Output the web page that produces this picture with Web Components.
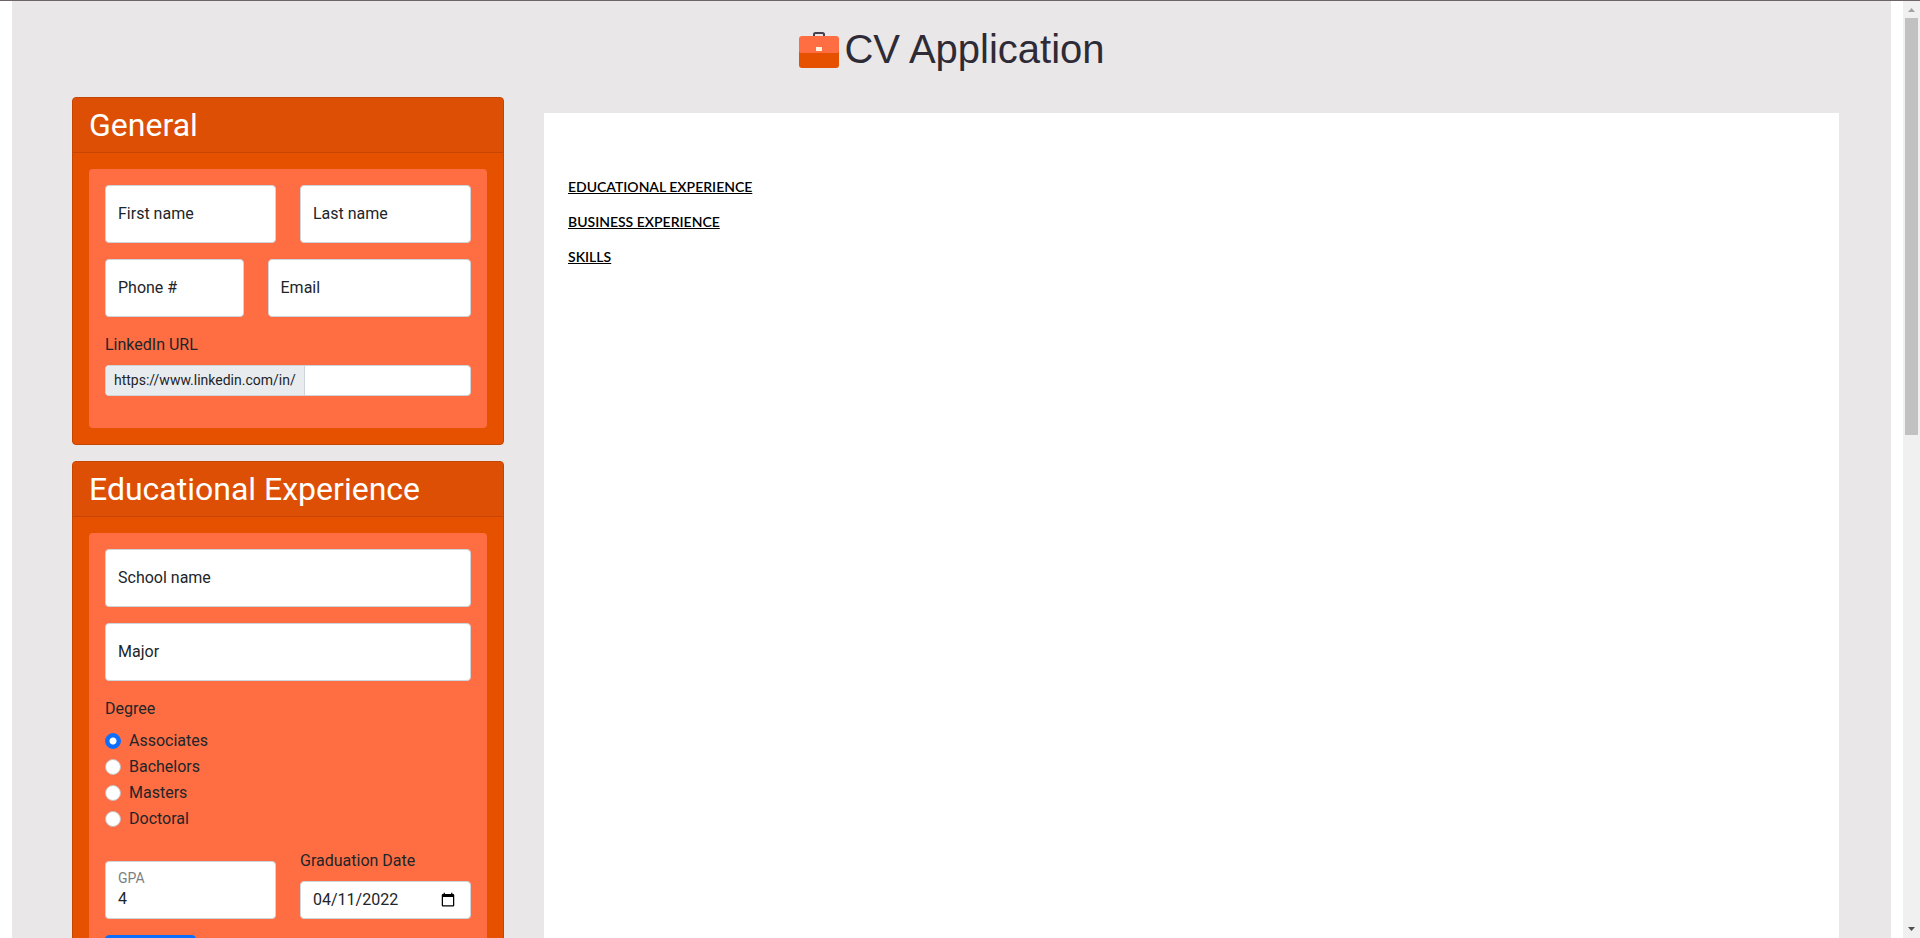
<!DOCTYPE html>
<html lang="en">
<head>
<meta charset="utf-8">
<meta name="viewport" content="width=device-width, initial-scale=1">
<title>CV Application</title>
<style>
  html, body { height: 100%; }
  body { margin: 0; overflow: hidden; background: #fff; color: #212529; font: 400 16px/24px Roboto, "Liberation Sans", sans-serif; }
</style>
</head>
<body>
<cv-app></cv-app>

<template id="tpl-app">
  <style>
    :host { display: flex; height: 100vh; box-sizing: border-box; border-top: 1px solid #6b6569; }
    .viewport { flex: 1; min-width: 0; overflow: hidden; padding: 0 12px; }
    .page { background: #e9e7e8; }
    main { display: grid; grid-template-columns: minmax(0, 432fr) minmax(0, 1295fr); column-gap: 40px; padding: 0 52px 0 60px; }
    .forms { display: flex; flex-direction: column; gap: 16px; padding-bottom: 24px; }
  </style>
  <div class="viewport">
    <div class="page">
      <cv-header>CV Application</cv-header>
      <main>
        <div class="forms">
          <form-card heading="General">
            <form-row>
              <float-field style="grid-column: span 6" label="First name"></float-field>
              <float-field style="grid-column: span 6" label="Last name"></float-field>
            </form-row>
            <form-row>
              <float-field style="grid-column: span 5" label="Phone #" type="tel"></float-field>
              <float-field style="grid-column: span 7" label="Email" type="email"></float-field>
            </form-row>
            <prefix-field label="LinkedIn URL" prefix="https://www.linkedin.com/in/"></prefix-field>
          </form-card>
          <form-card heading="Educational Experience">
            <float-field label="School name"></float-field>
            <float-field label="Major"></float-field>
            <radio-list legend="Degree" options="Associates,Bachelors,Masters,Doctoral"></radio-list>
            <form-row>
              <float-field style="grid-column: span 6" label="GPA" type="number" value="4"></float-field>
              <date-field style="grid-column: span 6" label="Graduation Date" value="2022-04-11"></date-field>
            </form-row>
            <add-button></add-button>
          </form-card>
        </div>
        <cv-paper>
          <h3>Educational Experience</h3>
          <h3>Business Experience</h3>
          <h3>Skills</h3>
        </cv-paper>
      </main>
    </div>
  </div>
  <scroll-rail></scroll-rail>
</template>

<template id="tpl-header">
  <style>
    :host { display: block; padding: 24px 0; }
    h1 { margin: 0; display: flex; justify-content: center; align-items: center; gap: 4px; font: 400 40px/48px "Liberation Sans", Arial, sans-serif; color: #2f2b36; }
    svg { display: block; width: 42px; height: 40px; }
  </style>
  <h1>
    <svg viewBox="0 0 42 40" aria-hidden="true">
      <path d="M16 8V5.500Q16 4 17.500 4H24.500Q26 4 26 5.500V8" fill="none" stroke="#45414c" stroke-width="2"/>
      <rect x="1" y="12" width="40" height="27" rx="3" fill="#e65100"/>
      <path d="M4 7H38Q41 7 41 10V22Q41 24 39 24H3Q1 24 1 22V10Q1 7 4 7Z" fill="#ff6e43"/>
      <rect x="18" y="18" width="6" height="4" fill="#fff3e0"/>
    </svg>
    <span><slot></slot></span>
  </h1>
</template>

<template id="tpl-card">
  <style>
    :host { display: block; background: #e65100; border: 1px solid #c54604; border-radius: 4px; overflow: hidden; }
    h2 { margin: 0; padding: 8px 16px; font-size: 32px; line-height: 38px; font-weight: 400; color: #fff; background: #de4f06; border-bottom: 1px solid #c54604; }
    .body { padding: 16px; }
    form { display: flex; flex-direction: column; gap: 16px; padding: 16px; background: #ff6e42; border-radius: 4px; }
  </style>
  <h2></h2>
  <div class="body"><form><slot></slot></form></div>
</template>

<template id="tpl-row">
  <style>
    :host { display: grid; grid-template-columns: repeat(12, minmax(0, 1fr)); column-gap: 24px; align-items: end; }
  </style>
  <slot></slot>
</template>

<template id="tpl-float">
  <style>
    :host { display: grid; min-width: 0; }
    input, label { grid-area: 1 / 1; }
    input { box-sizing: border-box; width: 100%; height: 58px; margin: 0; padding: 24px 12px 8px; font: inherit; color: #212529; background: #fff; border: 1px solid #ced4da; border-radius: 4px; outline: none; appearance: textfield; }
    input::-webkit-inner-spin-button { display: none; }
    label { padding: 17px 13px; pointer-events: none; z-index: 1; }
    input:focus + label, :host([value]) label { padding: 9px 13px; font-size: 14px; line-height: 16px; color: #7b7f83; }
  </style>
  <input id="field"><label for="field"></label>
</template>

<template id="tpl-prefix">
  <style>
    :host { display: flex; flex-direction: column; gap: 8px; padding-bottom: 16px; }
    .group { display: flex; height: 31px; box-sizing: border-box; border: 1px solid #ced4da; border-radius: 4px; background: #fff; overflow: hidden; font-size: 14px; line-height: 21px; }
    .group span { padding: 4px 8px; background: #e9ecef; border-right: 1px solid #ced4da; }
    input { flex: 1; min-width: 0; border: 0; margin: 0; padding: 4px 8px; font: inherit; background: none; outline: none; }
  </style>
  <label for="field"></label>
  <div class="group"><span></span><input id="field" type="text"></div>
</template>

<template id="tpl-radios">
  <style>
    :host { display: block; }
    fieldset { margin: 0; padding: 0; border: 0; min-width: 0; }
    legend { padding: 0 0 8px; }
    .option { display: flex; align-items: center; gap: 8px; padding-bottom: 2px; }
    input { appearance: none; box-sizing: border-box; width: 16px; height: 16px; margin: 0; border: 1px solid #c4bfc0; border-radius: 50%; background: #fff; }
    input:checked { border-color: #0d6efd; background: radial-gradient(circle, #fff 0 3px, #0d6efd 4px); }
  </style>
  <fieldset><legend></legend></fieldset>
</template>

<template id="tpl-date">
  <style>
    :host { display: flex; flex-direction: column; gap: 8px; min-width: 0; }
    input { box-sizing: border-box; width: 100%; height: 38px; margin: 0; padding: 6px 12px; font: inherit; color: #212529; background: #fff; border: 1px solid #ced4da; border-radius: 4px; }
    input::-webkit-datetime-edit-fields-wrapper { padding: 0; }
    input::-webkit-datetime-edit-month-field { padding: 0; }
    input::-webkit-datetime-edit-day-field { padding: 0; }
    input::-webkit-datetime-edit-year-field { padding: 0; }
  </style>
  <label for="field"></label>
  <input id="field" type="date">
</template>

<template id="tpl-button">
  <style>
    :host { display: flex; }
    button { min-width: 91px; height: 38px; padding: 6px 12px; border: 1px solid #0d6efd; border-radius: 4px; background: #0d6efd; color: #fff; font: inherit; }
  </style>
  <button type="button" aria-label="Add education"></button>
</template>

<template id="tpl-paper">
  <style>
    :host { display: flex; flex-direction: column; gap: 16px; margin-top: 16px; padding: 64px 24px; background: #fff; color: #000; }
    ::slotted(h3) { margin: 0; font: 600 14px/19px Lato, sans-serif; text-transform: uppercase; text-decoration: underline; }
  </style>
  <slot></slot>
</template>

<template id="tpl-rail">
  <style>
    :host { display: flex; flex-direction: column; align-items: center; width: 17px; background: #f0f0f0; }
    svg { display: block; width: 17px; height: 17px; flex: none; }
    .track { flex: 1; align-self: stretch; padding: 0 2px; }
    .thumb { height: calc(100% * 6 / 13); background: #c1c1c1; }
  </style>
  <svg viewBox="0 0 17 17" aria-hidden="true"><path d="M5 11L8.500 7L12 11Z" fill="#a3a3a3"/></svg>
  <div class="track"><div class="thumb"></div></div>
  <svg viewBox="0 0 17 17" aria-hidden="true"><path d="M5 6L8.500 10L12 6Z" fill="#505050"/></svg>
</template>

<script>
  class TemplateElement extends HTMLElement {
    constructor() {
      super();
      this.attachShadow({ mode: "open" }).append(
        document.getElementById(this.constructor.template).content.cloneNode(true));
    }
    $(selector) { return this.shadowRoot.querySelector(selector); }
  }

  class CvHeader extends TemplateElement { static template = "tpl-header"; }
  class FormRow extends TemplateElement { static template = "tpl-row"; }
  class AddButton extends TemplateElement { static template = "tpl-button"; }
  class CvPaper extends TemplateElement { static template = "tpl-paper"; }
  class ScrollRail extends TemplateElement { static template = "tpl-rail"; }
  class CvApp extends TemplateElement { static template = "tpl-app"; }

  class FormCard extends TemplateElement {
    static template = "tpl-card";
    connectedCallback() { this.$("h2").textContent = this.getAttribute("heading"); }
  }

  class FloatField extends TemplateElement {
    static template = "tpl-float";
    connectedCallback() {
      this.$("label").textContent = this.getAttribute("label");
      const input = this.$("input");
      input.type = this.getAttribute("type") || "text";
      input.value = this.getAttribute("value") || "";
      input.addEventListener("input", () => {
        if (input.value) this.setAttribute("value", input.value);
        else this.removeAttribute("value");
      });
    }
  }

  class PrefixField extends TemplateElement {
    static template = "tpl-prefix";
    connectedCallback() {
      this.$("label").textContent = this.getAttribute("label");
      this.$("span").textContent = this.getAttribute("prefix");
    }
  }

  class RadioList extends TemplateElement {
    static template = "tpl-radios";
    connectedCallback() {
      this.$("legend").textContent = this.getAttribute("legend");
      this.getAttribute("options").split(",").forEach((name, i) => {
        const row = document.createElement("div");
        row.className = "option";
        const input = document.createElement("input");
        Object.assign(input, { type: "radio", name: "option", id: "option-" + i, value: name, checked: i === 0 });
        const label = document.createElement("label");
        label.htmlFor = input.id;
        label.textContent = name;
        row.append(input, label);
        this.$("fieldset").append(row);
      });
    }
  }

  class DateField extends TemplateElement {
    static template = "tpl-date";
    connectedCallback() {
      this.$("label").textContent = this.getAttribute("label");
      this.$("input").value = this.getAttribute("value");
    }
  }

  customElements.define("cv-header", CvHeader);
  customElements.define("form-row", FormRow);
  customElements.define("add-button", AddButton);
  customElements.define("cv-paper", CvPaper);
  customElements.define("scroll-rail", ScrollRail);
  customElements.define("form-card", FormCard);
  customElements.define("float-field", FloatField);
  customElements.define("prefix-field", PrefixField);
  customElements.define("radio-list", RadioList);
  customElements.define("date-field", DateField);
  customElements.define("cv-app", CvApp);
</script>
</body>
</html>
